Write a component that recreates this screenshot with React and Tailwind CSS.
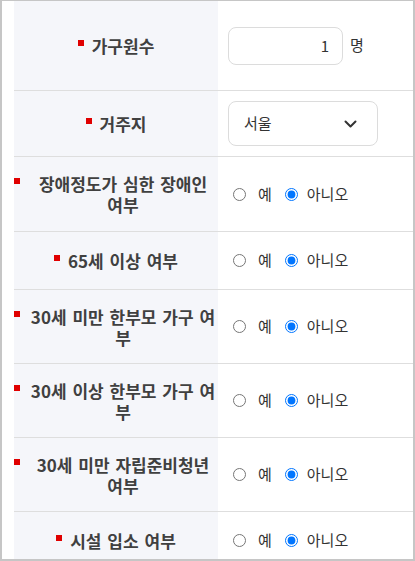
import { useState } from "react";

const rows = [
  { id: "members", lines: ["가구원수"], h: "h-[90px]", type: "count" },
  { id: "region", lines: ["거주지"], h: "h-[66px]", type: "select" },
  { id: "disabled", lines: ["장애정도가 심한 장애인", "여부"], h: "h-[75px]", type: "radio" },
  { id: "over65", lines: ["65세 이상 여부"], h: "h-[58px]", type: "radio" },
  { id: "single30u", lines: ["30세 미만 한부모 가구 여", "부"], h: "h-[74px]", type: "radio" },
  { id: "single30o", lines: ["30세 이상 한부모 가구 여", "부"], h: "h-[74px]", type: "radio" },
  { id: "youth", lines: ["30세 미만 자립준비청년", "여부"], h: "h-[74px]", type: "radio" },
  { id: "facility", lines: ["시설 입소 여부"], h: "h-[58px]", type: "radio" },
];

const Label = ({ lines }) => {
  const wrapped = lines.length > 1;
  return (
    <span
      className={`relative pl-[14px] text-center text-[17px] leading-[21px] font-bold text-[#404040] whitespace-nowrap [word-spacing:2px] ${
        wrapped ? "block w-full" : "inline-block"
      }`}
    >
      <span className="absolute left-0 top-[5px] h-[6px] w-[6px] bg-[#e00000]" />
      {lines.map((l, i) => (
        <span key={i}>
          {i > 0 && <br />}
          {l}
        </span>
      ))}
    </span>
  );
};

const YesNo = ({ name }) => (
  <div className="flex items-center text-[15px] text-[#333]">
    <input type="radio" name={name} className="m-0 ml-[5px] h-[13px] w-[13px]" />
    <span className="ml-[12px]">예</span>
    <input type="radio" name={name} defaultChecked className="m-0 ml-[13px] h-[13px] w-[13px]" />
    <span className="ml-[9px]">아니오</span>
  </div>
);

const App = () => {
  const [count, setCount] = useState("1");

  return (
    <div
      className="h-[561px] w-[415px] overflow-hidden border-2 border-t border-[#c6c6c6] bg-white pl-3"
      style={{ fontFamily: '"Noto Sans CJK KR", "Noto Sans", sans-serif' }}
    >
      {rows.map((r) => (
        <div
          key={r.id}
          className={`grid grid-cols-[204px_1fr] border-b border-[#dedede] ${r.h}`}
        >
          {/* label */}
          <div className="flex items-center justify-center bg-[#f5f6fa]">
            <Label lines={r.lines} />
          </div>

          {/* value */}
          <div className="flex items-center pl-[10px]">
            {r.type === "count" && (
              <div className="flex items-center">
                <input
                  value={count}
                  onChange={(e) => setCount(e.target.value)}
                  className="h-[38px] w-[115px] rounded-[8px] border border-[#dcdcdc] bg-white pr-[13px] text-right text-[15px] text-[#333] outline-none"
                />
                <span className="ml-[7px] text-[15px] text-[#333]">명</span>
              </div>
            )}
            {r.type === "select" && (
              <div className="flex h-[45px] w-[150px] items-center justify-between rounded-[8px] border border-[#dcdcdc] bg-white pl-[15px] pr-[20px] text-[15px] text-[#333]">
                <span>서울</span>
                <svg width="13" height="8" viewBox="0 0 13 8" fill="none">
                  <path d="M1.5 1.5l5 5 5-5" stroke="#333" strokeWidth="2" strokeLinecap="round" strokeLinejoin="round" />
                </svg>
              </div>
            )}
            {r.type === "radio" && <YesNo name={r.id} />}
          </div>
        </div>
      ))}
    </div>
  );
};

export default App;
